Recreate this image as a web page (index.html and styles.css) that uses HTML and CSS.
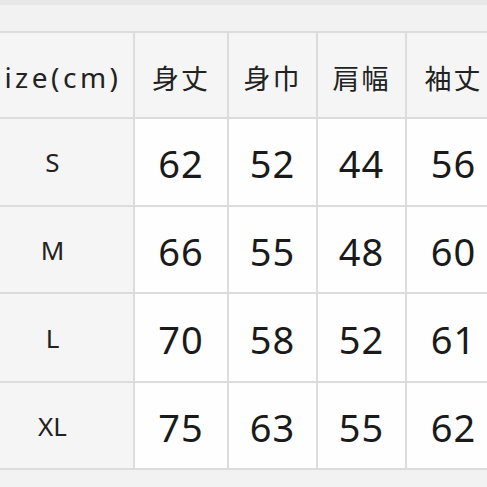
FILE: index.html
```html
<!DOCTYPE html>
<html lang="ja">
<head>
<meta charset="utf-8">
<title>Size chart</title>
<link rel="stylesheet" href="styles.css">
</head>
<body>
<div class="topbar"></div>
<div class="page">
  <div class="chart">
    <div class="cell head label">Size(cm)</div>
    <div class="cell head">身丈</div>
    <div class="cell head">身巾</div>
    <div class="cell head">肩幅</div>
    <div class="cell head">袖丈</div>

    <div class="cell size">S</div>
    <div class="cell num">62</div>
    <div class="cell num">52</div>
    <div class="cell num">44</div>
    <div class="cell num">56</div>

    <div class="cell size">M</div>
    <div class="cell num">66</div>
    <div class="cell num">55</div>
    <div class="cell num">48</div>
    <div class="cell num">60</div>

    <div class="cell size">L</div>
    <div class="cell num">70</div>
    <div class="cell num">58</div>
    <div class="cell num">52</div>
    <div class="cell num">61</div>

    <div class="cell size">XL</div>
    <div class="cell num">75</div>
    <div class="cell num">63</div>
    <div class="cell num">55</div>
    <div class="cell num">62</div>
  </div>
</div>
</body>
</html>
```

FILE: styles.css
```css
html, body {
  margin: 0;
  padding: 0;
  background: #f2f2f2;
  overflow: hidden;
  font-family: "Noto Sans", "Noto Sans CJK JP", sans-serif;
  color: #1c1c1c;
}

.topbar {
  height: 5px;
  background: #e7e7e7;
}

.page {
  padding-top: 26px;
}

.chart {
  display: grid;
  grid-template-columns: 161px 92px 87px 87px 93px;
  grid-template-rows: 84px 86px 85px 87px 85px;
  gap: 2px;
  padding: 2px;
  margin-left: -30px;
  width: max-content;
  background: #dcdcdc;
}

.cell {
  display: flex;
  align-items: center;
  justify-content: center;
  background: #fefefe;
}

.head {
  background: #f5f5f5;
  font-family: "Noto Sans CJK JP", "Noto Sans", sans-serif;
  font-size: 27px;
  letter-spacing: 2px;
  padding-top: 4px;
  color: #222;
}

.head.label {
  font-family: "Noto Sans", "Noto Sans CJK JP", sans-serif;
  font-size: 28px;
  letter-spacing: 3.5px;
  padding-left: 2px;
}

.size {
  background: #f5f5f5;
  font-size: 26px;
  color: #222;
}

.num {
  font-size: 38px;
  color: #1a1a1a;
  letter-spacing: 1px;
  padding-top: 2px;
}
```
